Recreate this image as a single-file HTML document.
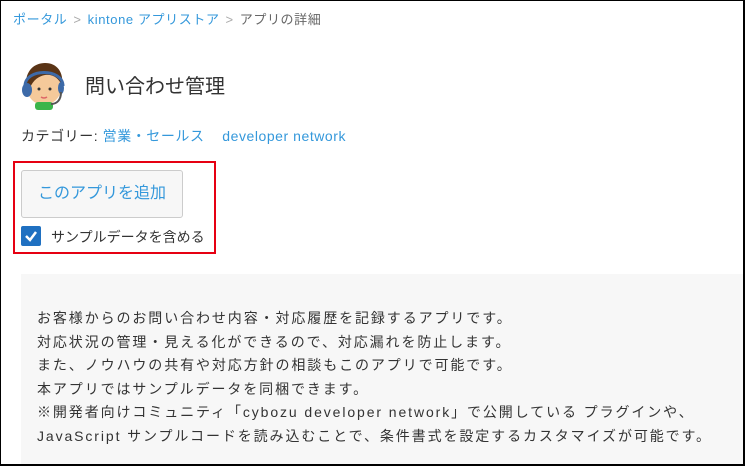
<!DOCTYPE html>
<html><head><meta charset="utf-8"><style>
*{margin:0;padding:0;box-sizing:border-box}
html,body{width:745px;height:466px;overflow:hidden;background:#fff}
body{font-family:"Liberation Sans","Noto Sans CJK JP",sans-serif;color:#333;position:relative}
.frame{position:absolute;left:0;top:0;width:745px;height:466px;border:1px solid #000;border-width:1px 2px 2px 1px}
.bc{position:absolute;left:13px;top:9px;font-size:13px;color:#999;letter-spacing:0.6px}
.bc a{color:#3498db;text-decoration:none}
.bc .g{margin:0 6px;color:#aaa}
.title{position:absolute;left:85px;top:70px;font-size:20px;color:#333}
.cat{position:absolute;left:21px;top:126px;font-size:14px;color:#333;letter-spacing:0.55px}
.cat a{color:#3498db}
.red{position:absolute;left:13px;top:161px;width:203px;height:93px;border:2px solid #e60012}
.btn{position:absolute;left:21px;top:170px;width:162px;height:48px;border:1px solid #ccc;border-radius:3px;background:#f7f7f7;color:#3498db;font-size:16px;text-align:center;line-height:46px}
.cb{position:absolute;left:21px;top:226px;width:20px;height:20px;background:#1f70c1;border-radius:2px}
.cbl{position:absolute;left:51px;top:227px;font-size:14px;color:#333}
.desc{position:absolute;left:21px;top:274px;width:730px;height:200px;background:#f7f7f7;padding:33px 0 0 16px;font-size:14px;line-height:23.5px;color:#333;letter-spacing:1.9px;white-space:nowrap}
</style></head><body>
<div class="bc"><a>ポータル</a><span class="g">&gt;</span><a>kintone アプリストア</a><span class="g">&gt;</span><span style="color:#666">アプリの詳細</span></div>
<svg style="position:absolute;left:19px;top:60px" width="50" height="50" viewBox="0 0 50 50">
<circle cx="25" cy="28" r="17" fill="#f5c99a"/>
<rect x="16" y="42" width="18" height="8" rx="3" fill="#3bb54a"/>
<path d="M7 26 C6 10 16 3 26 3 C38 3 45 12 43 26 C40 18 34 14 26 15 C20 16 14 20 11 28 Z" fill="#5a3416"/>
<path d="M6 26 C6 8 44 8 44 26" fill="none" stroke="#3d6aa8" stroke-width="3"/>
<ellipse cx="8" cy="30" rx="5" ry="7" fill="#3d6aa8"/>
<ellipse cx="42" cy="28" rx="3" ry="6" fill="#3d6aa8"/>
<path d="M42 32 C42 40 38 44 32 44" stroke="#555" stroke-width="2" fill="none"/>
<circle cx="20" cy="29" r="1.5" fill="#333"/><circle cx="31" cy="29" r="1.5" fill="#333"/>
<path d="M22 37 Q25 39 28 37" stroke="#d66" stroke-width="1.5" fill="none"/>
</svg>
<div class="title">問い合わせ管理</div>
<div class="cat">カテゴリー: <a>営業・セールス</a>&nbsp;&nbsp;&nbsp;&nbsp;<a>developer network</a></div>
<div class="red"></div>
<div class="btn">このアプリを追加</div>
<div class="cb"><svg width="20" height="20"><path d="M5 10 L9 14 L15 6" stroke="#fff" stroke-width="2.5" fill="none"/></svg></div>
<div class="cbl">サンプルデータを含める</div>
<div class="desc">お客様からのお問い合わせ内容・対応履歴を記録するアプリです。<br>対応状況の管理・見える化ができるので、対応漏れを防止します。<br>また、ノウハウの共有や対応方針の相談もこのアプリで可能です。<br>本アプリではサンプルデータを同梱できます。<br>※開発者向けコミュニティ「cybozu developer network」で公開している プラグインや、<br>JavaScript サンプルコードを読み込むことで、条件書式を設定するカスタマイズが可能です。</div>
<div class="frame"></div>
</body></html>
